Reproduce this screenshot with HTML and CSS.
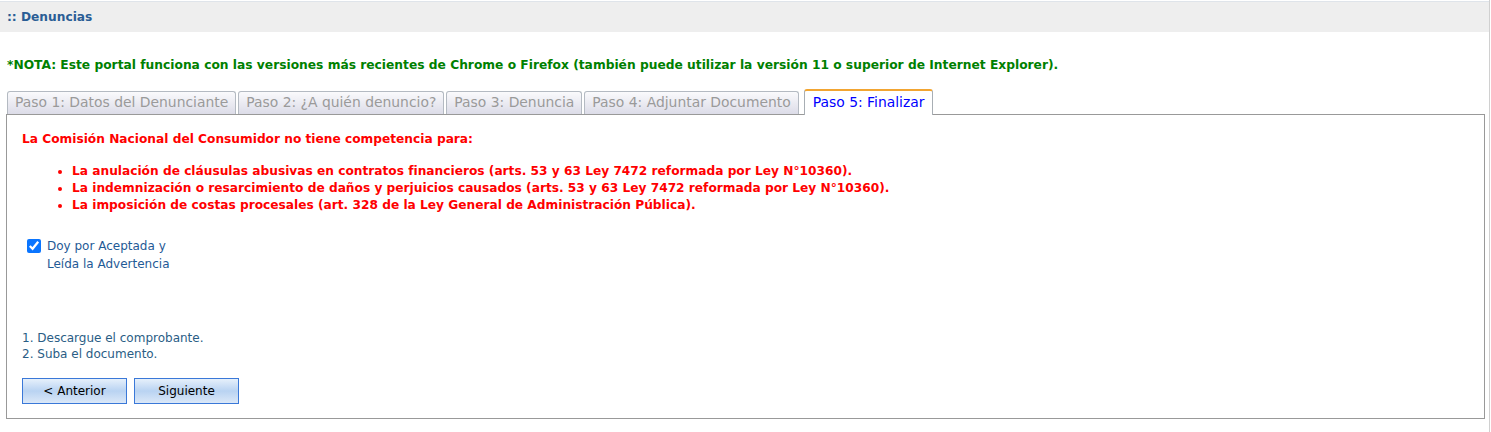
FILE: index.html
```html
<!DOCTYPE html>
<html lang="es">
<head>
<meta charset="utf-8">
<title>Denuncias</title>
<link rel="stylesheet" href="styles.css">
</head>
<body>
<div class="page">
  <div class="header">:: Denuncias</div>
  <p class="nota">*NOTA: Este portal funciona con las versiones más recientes de Chrome o Firefox (también puede utilizar la versión 11 o superior de Internet Explorer).</p>
  <div class="tabs">
    <ul class="tablist">
      <li class="tab">Paso 1: Datos del Denunciante</li>
      <li class="tab">Paso 2: ¿A quién denuncio?</li>
      <li class="tab">Paso 3: Denuncia</li>
      <li class="tab">Paso 4: Adjuntar Documento</li>
      <li class="tab active">Paso 5: Finalizar</li>
    </ul>
    <div class="panel">
      <p class="warn">La Comisión Nacional del Consumidor no tiene competencia para:</p>
      <ul class="warnlist">
        <li>La anulación de cláusulas abusivas en contratos financieros (arts. 53 y 63 Ley 7472 reformada por Ley N°10360).</li>
        <li>La indemnización o resarcimiento de daños y perjuicios causados (arts. 53 y 63 Ley 7472 reformada por Ley N°10360).</li>
        <li>La imposición de costas procesales (art. 328 de la Ley General de Administración Pública).</li>
      </ul>
      <label class="accept">
        <input type="checkbox" checked>
        <span>Doy por Aceptada y<br>Leída la Advertencia</span>
      </label>
      <div class="steps">
        <div>1. Descargue el comprobante.</div>
        <div>2. Suba el documento.</div>
      </div>
      <div class="buttons">
        <button class="btn">&lt; Anterior</button>
        <button class="btn">Siguiente</button>
      </div>
    </div>
  </div>
</div>
</body>
</html>
```
FILE: styles.css
```css
html, body {
  margin: 0;
  padding: 0;
  background: #fff;
}
body {
  font-family: "DejaVu Sans", Verdana, sans-serif;
  font-size: 12px;
}
.page {
  width: 1490px;
  min-height: 432px;
  border-right: 1px solid #d0d0d0;
  box-sizing: border-box;
  padding-top: 1px;
}
.header {
  border-top: 1px solid #dfe4ea;
  background: #eeeeee;
  height: 30px;
  line-height: 30px;
  padding-left: 7px;
  color: #2a5d95;
  font-weight: bold;
  font-size: 12.2px;
}
.nota {
  margin: 24px 0 0 7px;
  height: 18px;
  line-height: 18px;
  color: #008000;
  font-weight: bold;
  font-size: 12.25px;
}
.tabs {
  margin: 15px 6px 0 6px;
  width: 1479px;
}
.tablist {
  list-style: none;
  margin: 0;
  padding: 0 0 0 1px;
  display: flex;
  gap: 2px;
  height: 25px;
  align-items: flex-end;
  position: relative;
  z-index: 1;
}
.tab {
  box-sizing: border-box;
  height: 23px;
  line-height: 21px;
  padding: 0 7px;
  border: 1px solid #b4bac2;
  border-bottom: none;
  border-radius: 3px 3px 0 0;
  background: linear-gradient(#fafafc, #dcdce8);
  color: #9a9a9a;
  font-size: 13.9px;
  white-space: nowrap;
}
.tab.active {
  background: #fff;
  color: #0000ff;
  border-top: 2px solid #f2a531;
  border-color: #f2a531 #a8aeb4 #fff #a8aeb4;
  margin-bottom: -1px;
  height: 26px;
  line-height: 23px;
  margin-left: 3px;
  padding: 0 8px;
}
.panel {
  border: 1px solid #999;
  height: 305px;
  box-sizing: border-box;
  padding: 16px 15px 0 15px;
}
.warn {
  margin: 0;
  color: #ff0000;
  font-weight: bold;
  font-size: 12.2px;
  line-height: 17px;
}
.warnlist {
  margin: 15px 0 0 0;
  padding-left: 50px;
  color: #ff0000;
  font-weight: bold;
  font-size: 12.2px;
  line-height: 17px;
}
.accept {
  display: flex;
  align-items: flex-start;
  margin: 23px 0 0 5px;
  color: #1f5a96;
  line-height: 18px;
}
.accept input {
  width: 14px;
  height: 14px;
  margin: 2px 6px 0 0;
  accent-color: #0a75ff;
}
.steps {
  margin-top: 57px;
  color: #2a5d85;
  line-height: 16px;
}
.buttons {
  display: flex;
  gap: 7px;
  margin-top: 16px;
}
.btn {
  width: 105px;
  height: 26px;
  border: 1px solid #3a78d8;
  background: linear-gradient(#e6f0fb, #b9d3f2 50%, #dbe8f8);
  font-family: "DejaVu Sans", Verdana, sans-serif;
  font-size: 12px;
  color: #000;
  padding: 0;
}
```
